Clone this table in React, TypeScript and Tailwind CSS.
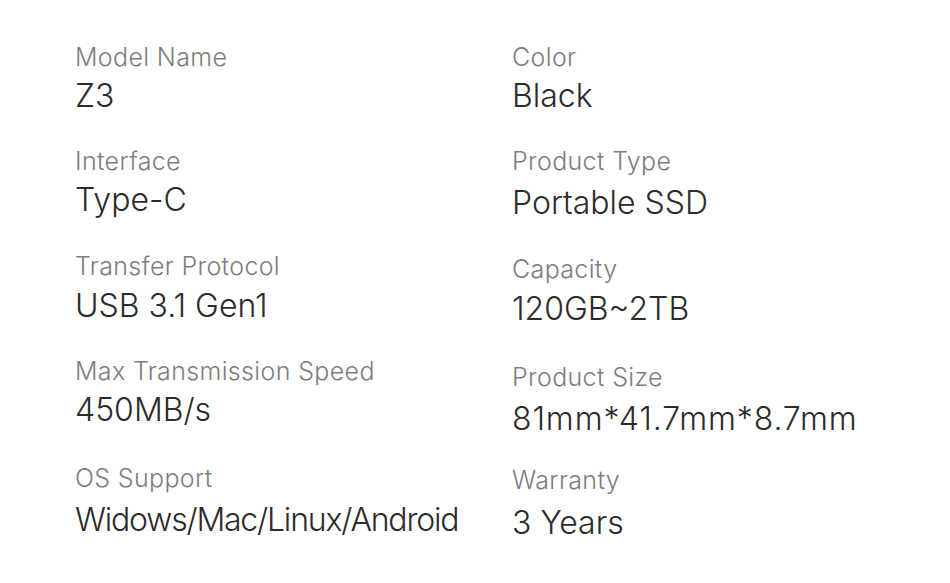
type Item = { label: string; value: string; box: string; gap: string; valueCls?: string };

const left: Item[] = [
  { label: "Model Name", value: "Z3", box: "h-[104px]", gap: "mt-[4px]" },
  { label: "Interface", value: "Type-C", box: "h-[105px]", gap: "mt-[4px]" },
  { label: "Transfer Protocol", value: "USB 3.1 Gen1", box: "h-[105px]", gap: "mt-[5px]" },
  { label: "Max Transmission Speed", value: "450MB/s", box: "h-[107px]", gap: "mt-[4px]" },
  {
    label: "OS Support",
    value: "Widows/Mac/Linux/Android",
    box: "",
    gap: "mt-[7px]",
    valueCls: "tracking-[-1.2px]",
  },
];

const right: Item[] = [
  { label: "Color", value: "Black", box: "h-[104px]", gap: "mt-[4px]" },
  { label: "Product Type", value: "Portable SSD", box: "h-[108px]", gap: "mt-[7px]" },
  { label: "Capacity", value: "120GB~2TB", box: "h-[108px]", gap: "mt-[5px]" },
  { label: "Product Size", value: "81mm*41.7mm*8.7mm", box: "h-[103px]", gap: "mt-[7px]", valueCls: "tracking-[0.85px]" },
  { label: "Warranty", value: "3 Years", box: "", gap: "mt-[8px]" },
];

function Spec({ item }: { item: Item }) {
  return (
    <div className={`flex flex-col ${item.box}`}>
      <span className="text-[25px] leading-[30px] font-light text-[#7d7d7d] tracking-[0.35px]">{item.label}</span>
      <span className={`${item.gap} text-[32px] leading-[40px] font-light text-[#2b2b2b] ${item.valueCls ?? ""}`}>
        {item.value}
      </span>
    </div>
  );
}

export default function App() {
  return (
    <main
      className="w-[950px] h-[583px] bg-white flex pt-[42px]"
      style={{ fontFamily: "Inter, 'Noto Sans', sans-serif" }}
    >
      <div className="w-[512px] pl-[75px] flex flex-col">
        {left.map((s) => (
          <Spec key={s.label} item={s} />
        ))}
      </div>
      <div className="flex flex-col">
        {right.map((s) => (
          <Spec key={s.label} item={s} />
        ))}
      </div>
    </main>
  );
}
